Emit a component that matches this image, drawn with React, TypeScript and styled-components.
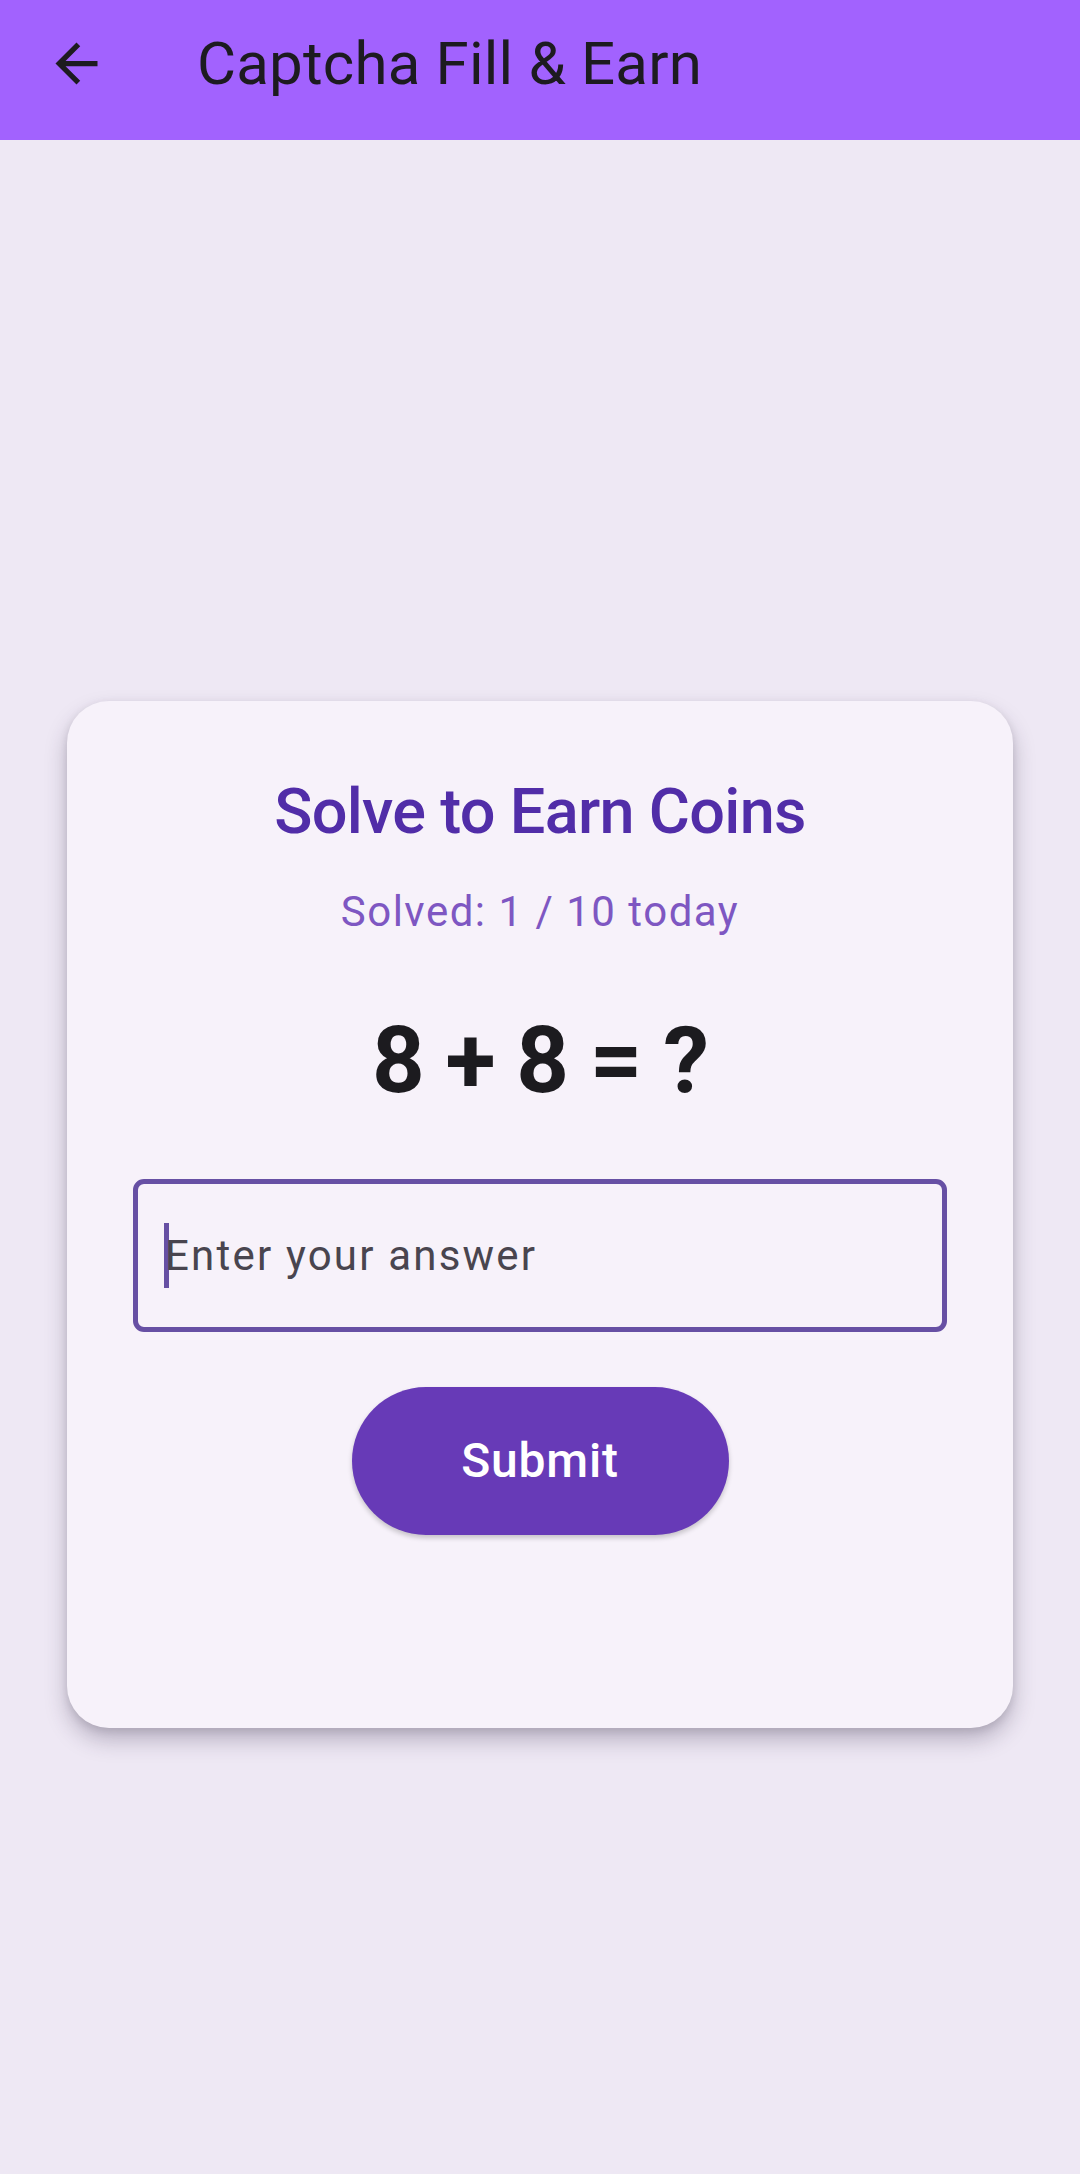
import React from "react";
import styled, { createGlobalStyle } from "styled-components";

const GlobalStyle = createGlobalStyle`
  html, body {
    margin: 0;
    padding: 0;
    background: #eee8f4;
    font-family: Roboto, "Noto Sans", "Liberation Sans", sans-serif;
  }
  * { box-sizing: border-box; }
`;

const Screen = styled.div`
  min-height: 2174px;
  display: flex;
  flex-direction: column;
  background: #eee8f4;
`;

const AppBar = styled.header`
  height: 140px;
  display: flex;
  align-items: center;
  padding: 0 0 13px 45px;
  background: #a262fe;
`;

const BackButton = styled.button`
  width: 63px;
  height: 63px;
  padding: 0;
  border: none;
  background: transparent;
  display: flex;
  align-items: center;
  justify-content: center;
  color: #1d1b20;
`;

const AppTitle = styled.h1`
  margin: 0 0 0 89px;
  font-size: 60px;
  line-height: 1;
  font-weight: 400;
  letter-spacing: 0.2px;
  color: #1d1b20;
`;

const Body = styled.main`
  flex: 1;
  padding: 561px 67px 0;
`;

const Card = styled.section`
  background: #f7f2fa;
  border-radius: 42px;
  padding: 79px 66px 193px;
  display: flex;
  flex-direction: column;
  align-items: center;
  box-shadow: 0 12px 22px rgba(45, 35, 70, 0.28), 0 3px 8px rgba(0, 0, 0, 0.1);
`;

const Heading = styled.h2`
  margin: 0;
  font-size: 63px;
  line-height: 1;
  font-weight: 500;
  letter-spacing: -0.7px;
  color: #512da8;
  text-align: center;
`;

const Progress = styled.p`
  margin: 48px 0 0;
  font-size: 42px;
  line-height: 1;
  font-weight: 400;
  letter-spacing: 1.5px;
  color: #7e57c2;
  text-align: center;
`;

const Equation = styled.div`
  margin-top: 82px;
  font-size: 92px;
  line-height: 1;
  font-weight: 700;
  letter-spacing: -1.1px;
  color: #1c1b1f;
  text-align: center;
`;

const Field = styled.div`
  margin-top: 72px;
  width: 100%;
  height: 153px;
  border: 5px solid #6750a4;
  border-radius: 11px;
  display: flex;
  align-items: center;
  padding-left: 26px;
`;

const Caret = styled.span`
  width: 5px;
  height: 65px;
  background: #6750a4;
  margin-right: -4px;
  flex-shrink: 0;
`;

const Placeholder = styled.span`
  font-size: 42px;
  line-height: 1;
  letter-spacing: 2.2px;
  color: #49454f;
`;

const SubmitButton = styled.button`
  margin-top: 55px;
  width: 377px;
  height: 148px;
  border: none;
  border-radius: 74px;
  background: #673ab7;
  color: #ffffff;
  font-family: Roboto, "Noto Sans", sans-serif;
  font-size: 48px;
  line-height: 1;
  font-weight: 500;
  letter-spacing: 0.8px;
  box-shadow: 0 3px 5px rgba(0, 0, 0, 0.2);
`;

const ArrowBack = () => (
  <svg width="63" height="63" viewBox="0 0 24 24" fill="currentColor">
    <path d="M20 11H7.83l5.59-5.59L12 4l-8 8 8 8 1.41-1.41L7.83 13H20v-2z" />
  </svg>
);

export default function App() {
  return (
    <Screen>
      <GlobalStyle />
      <AppBar>
        <BackButton aria-label="Back">
          <ArrowBack />
        </BackButton>
        <AppTitle>Captcha Fill &amp; Earn</AppTitle>
      </AppBar>
      <Body>
        <Card>
          <Heading>Solve to Earn Coins</Heading>
          <Progress>Solved: 1 / 10 today</Progress>
          <Equation>8 + 8 = ?</Equation>
          <Field>
            <Caret />
            <Placeholder>Enter your answer</Placeholder>
          </Field>
          <SubmitButton>Submit</SubmitButton>
        </Card>
      </Body>
    </Screen>
  );
}
